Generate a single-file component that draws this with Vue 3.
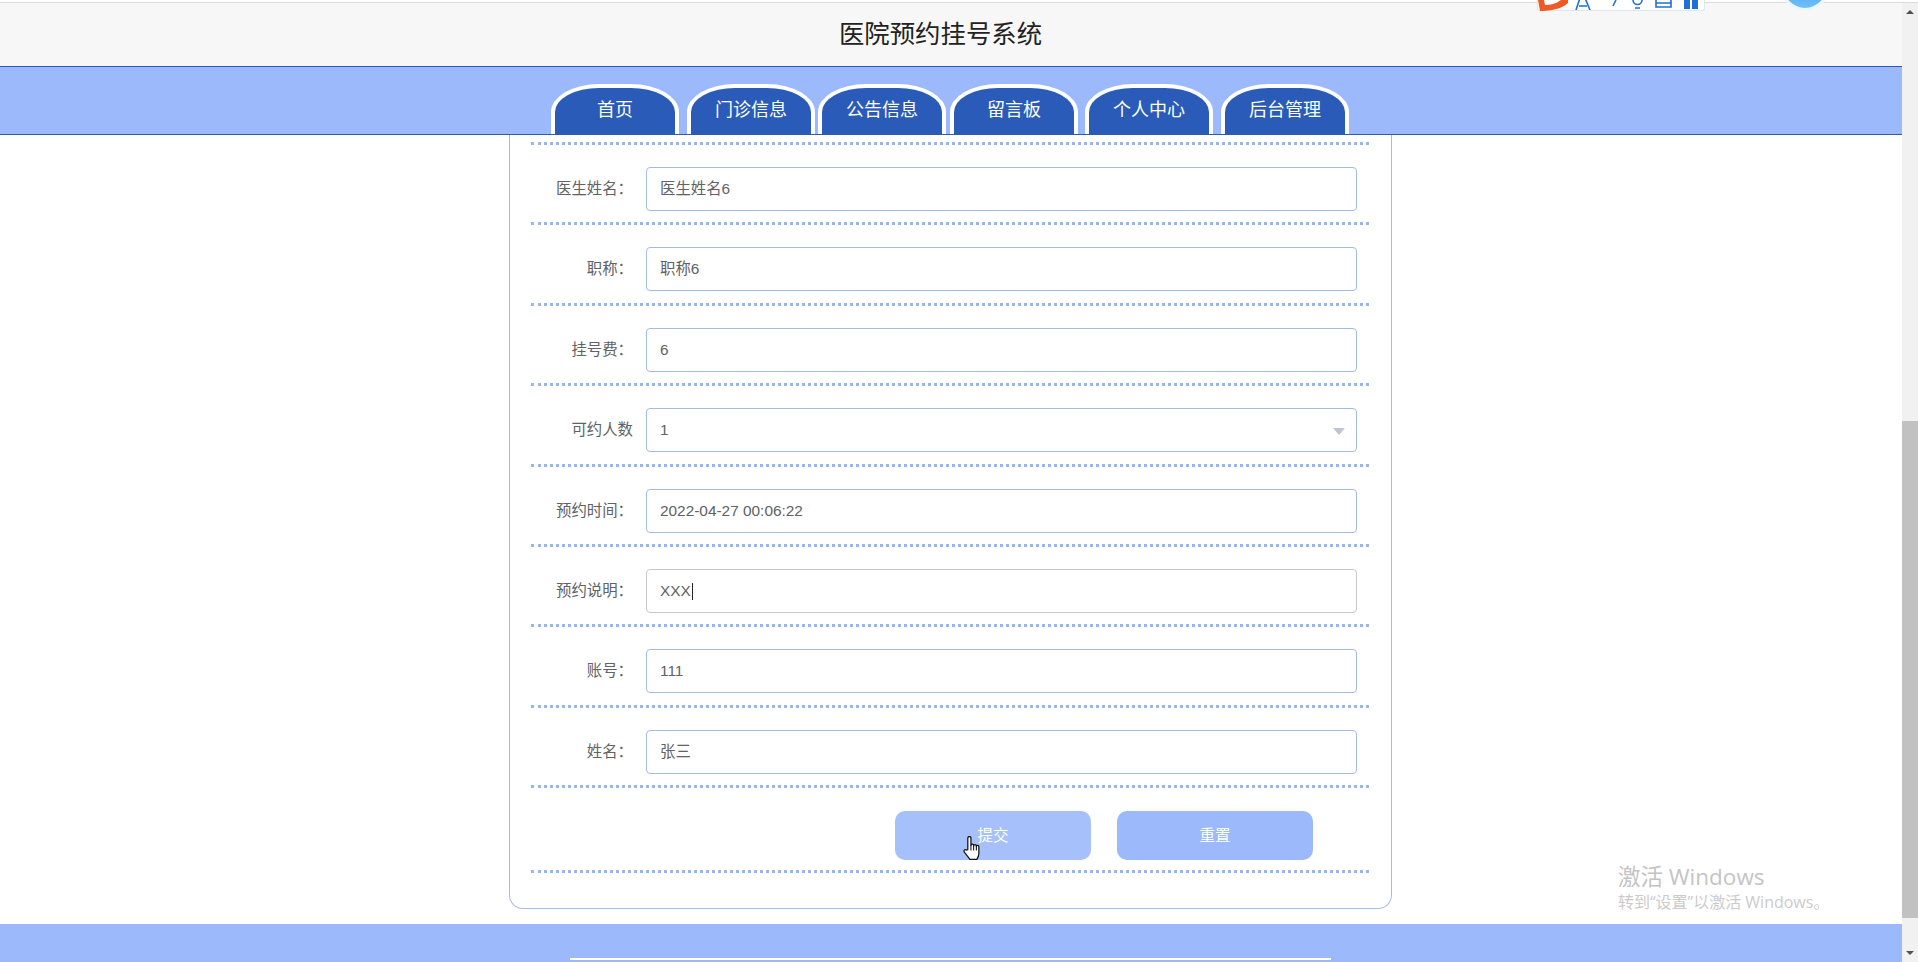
<template>
  <div class="page">
    <div class="window-line" />
    <div class="view">
      <div class="content">
        <div class="title">医院预约挂号系统</div>
        <nav class="nav">
          <a
            v-for="item in navItems"
            :key="item"
            class="nav__tab"
          >{{ item }}</a>
        </nav>

        <main class="main">
          <form class="form" @submit.prevent>
            <div class="form__row form__row--empty" />
            <div
              v-for="field in fields"
              :key="field.label"
              class="form__row"
            >
              <label class="form__label">{{ field.label }}</label>
              <div
                class="form__input"
                :class="{ 'form__input--focus': field.focus }"
              >
                {{ field.value }}<span v-if="field.focus" class="form__caret" />
                <span v-if="field.select" class="form__arrow" />
              </div>
            </div>
            <div class="form__row form__row--actions">
              <button type="button" class="btn btn--hover">
                提交
                <svg class="btn__cursor" viewBox="0 0 18 24" width="19" height="25">
                  <path
                    d="M4.5 13V2a1.5 1.5 0 0 1 3 0v7a1.3 1.3 0 0 1 2.6 0v.5a1.3 1.3 0 0 1 2.6 0v.7a1.2 1.2 0 0 1 2.4 0V17c0 2.5-1 4-2 5.5H6.5C5 20 3 18 1.2 15.5.2 14 1.5 12.5 3 13.5Z"
                    fill="#fff"
                    stroke="#111"
                    stroke-width="1.2"
                    stroke-linejoin="round"
                  />
                  <path d="M7.5 9v5M10.1 9.5V14M12.7 10v4" stroke="#111" fill="none" />
                </svg>
              </button>
              <button type="button" class="btn">重置</button>
            </div>
          </form>
        </main>

        <footer class="footer">
          <div class="footer__line" />
        </footer>
      </div>

      <div class="scrollbar">
        <span class="scrollbar__up" />
        <div class="scrollbar__track">
          <div class="scrollbar__thumb" />
        </div>
        <span class="scrollbar__down" />
      </div>
    </div>

    <!-- browser extension toolbar, cut off by the top of the screen -->
    <div class="ext">
      <svg class="ext__logo" viewBox="0 0 32 12" width="32" height="12">
        <path d="M0 0 2 11C12 11 24 9 30 3V0H23C18 4 12 5 7 5L6 0Z" fill="#ee5a24" />
      </svg>
      <svg class="ext__icons" viewBox="0 0 130 10" width="130" height="10">
        <g fill="none" stroke="#1f6fd6" stroke-width="1.6">
          <path d="M1 10 5-2M15 10 10-2M4 6h8" />
          <path d="M38 6 41 0" />
          <path d="M58 0a4.5 4.5 0 0 0 9 0M60 8h5" />
          <path d="M81 0v7h15V0M81 3h15" />
        </g>
        <path d="M109 0h6v9h-6zM117 0h6v9h-6z" fill="#1f6fd6" />
      </svg>
    </div>
    <div class="ball" />

    <div class="watermark">
      <div class="watermark__big">激活 Windows</div>
      <div class="watermark__small">转到“设置”以激活 Windows。</div>
    </div>
  </div>
</template>

<script setup>
const navItems = ['首页', '门诊信息', '公告信息', '留言板', '个人中心', '后台管理']

const fields = [
  { label: '医生姓名：', value: '医生姓名6' },
  { label: '职称：', value: '职称6' },
  { label: '挂号费：', value: '6' },
  { label: '可约人数', value: '1', select: true },
  { label: '预约时间：', value: '2022-04-27 00:06:22' },
  { label: '预约说明：', value: 'XXX', focus: true },
  { label: '账号：', value: '111' },
  { label: '姓名：', value: '张三' },
]
</script>

<style scoped>
.page {
  position: relative;
  display: flex;
  flex-direction: column;
  height: 962px;
  overflow: hidden;
  background: #fff;
  font-family: "Liberation Sans", "Noto Sans CJK SC", sans-serif;
  color: #606266;
}

.window-line {
  flex: none;
  height: 3px;
  box-sizing: border-box;
  background: #fff;
  border-bottom: 1px solid #dcdcdc;
}

.view {
  flex: 1;
  display: flex;
  min-height: 0;
}

.content {
  flex: 1;
  min-width: 0;
  display: flex;
  flex-direction: column;
}

.title {
  height: 63px;
  padding-right: 21px;
  background: #f7f7f7;
  color: #222;
  font-size: 25.4px;
  line-height: 63px;
  text-align: center;
}

.nav {
  height: 69px;
  box-sizing: border-box;
  display: flex;
  align-items: flex-end;
  padding-left: 551px;
  background: #9bb9fb;
  border-top: 1px solid #2a5bb8;
  border-bottom: 1px solid #2a5bb8;
}

.nav__tab {
  width: 128px;
  height: 50px;
  box-sizing: border-box;
  padding-top: 7px;
  border: 4px solid #fff;
  border-bottom: 0;
  border-radius: 48px 48px 0 0 / 28px 28px 0 0;
  background: #2a5bb8;
  color: #fff;
  font-size: 18px;
  line-height: 30px;
  text-align: center;
}

.nav__tab:nth-child(2) { margin-left: 8px; }
.nav__tab:nth-child(3) { margin-left: 3px; }
.nav__tab:nth-child(4) { margin-left: 4px; }
.nav__tab:nth-child(5) { margin-left: 7px; }
.nav__tab:nth-child(6) { margin-left: 8px; }

.main {
  flex: 1;
  min-height: 0;
}

.form {
  width: 883px;
  box-sizing: border-box;
  margin-left: 509px;
  padding: 7px 22px 0 21px;
  height: 774px;
  border: 1px solid #a5bde6;
  border-top: 0;
  border-radius: 0 0 14px 14px;
}

.form__row {
  display: flex;
  gap: 12px;
  height: 80.4px;
  box-sizing: border-box;
  padding-top: 22px;
  border-bottom: 3px dotted #9ab5ec;
}

.form__row--empty {
  height: 3px;
  padding: 0;
}

.form__row--actions {
  height: 85px;
  gap: 26px;
  padding: 23px 0 0 364px;
}

.form__label {
  width: 102px;
  height: 44px;
  font-size: 15.4px;
  line-height: 43px;
  text-align: right;
}

.form__input {
  position: relative;
  width: 711px;
  margin-left: 1px;
  height: 44px;
  box-sizing: border-box;
  padding: 0 13px;
  border: 1px solid #a3bbe6;
  border-radius: 4px;
  font-size: 15.4px;
  line-height: 41px;
}

.form__input--focus {
  border-color: #c8c8c8;
}

.form__caret {
  display: inline-block;
  width: 1px;
  height: 17px;
  margin-left: 1px;
  vertical-align: middle;
  background: #222;
}

.form__arrow {
  position: absolute;
  top: 19px;
  right: 11px;
  border-style: solid;
  border-width: 7px 6px 0;
  border-color: #c0c4cc transparent transparent;
}

.btn {
  position: relative;
  width: 196px;
  height: 49px;
  padding: 0 0 3px;
  border: 0;
  border-radius: 10px;
  background: #9bb9fb;
  color: #fff;
  font-family: inherit;
  font-size: 15.5px;
}

.btn--hover {
  background: #a5c0fb;
}

.btn__cursor {
  position: absolute;
  left: 68px;
  top: 25px;
}

.footer {
  flex: none;
  height: 38px;
  box-sizing: border-box;
  padding-top: 34px;
  background: #9bb9fb;
}

.footer__line {
  width: 761px;
  height: 2px;
  margin-left: 570px;
  background: #fff;
}

.scrollbar {
  flex: none;
  width: 16px;
  display: flex;
  flex-direction: column;
  align-items: center;
  background: #f1f1f1;
}

.scrollbar__up,
.scrollbar__down {
  flex: none;
  margin: 7px 0;
  border-style: solid;
  border-color: transparent;
}

.scrollbar__up {
  border-width: 0 4px 4px;
  border-bottom-color: #505050;
}

.scrollbar__down {
  border-width: 4px 4px 0;
  border-top-color: #505050;
}

.scrollbar__track {
  flex: 1;
  width: 100%;
  padding-top: 400px;
}

.scrollbar__thumb {
  height: 497px;
  background: #c1c1c1;
}

.ext {
  position: absolute;
  top: 0;
  left: 1537px;
  width: 166px;
  height: 10px;
  background: #fff;
  border: 1px solid #dfe6ee;
  border-top: 0;
  border-radius: 0 0 3px 3px;
}

.ext__logo {
  position: absolute;
  left: 0;
  top: 0;
}

.ext__icons {
  position: absolute;
  left: 37px;
  top: 0;
}

.ball {
  position: absolute;
  left: 1781px;
  top: -37px;
  width: 48px;
  height: 48px;
  box-sizing: border-box;
  border: 3px solid #eef6fc;
  border-radius: 50%;
  background: linear-gradient(180deg, #2f8fee 0%, #6fc0f8 100%);
}

.watermark {
  position: absolute;
  left: 1618px;
  top: 861px;
  color: #c4c4c4;
  font-family: "Open Sans", "Noto Sans CJK SC", sans-serif;
}

.watermark__big {
  font-size: 22.5px;
  line-height: 31px;
}

.watermark__small {
  font-size: 16px;
  line-height: 21px;
  color: #cbcbcb;
}
</style>
